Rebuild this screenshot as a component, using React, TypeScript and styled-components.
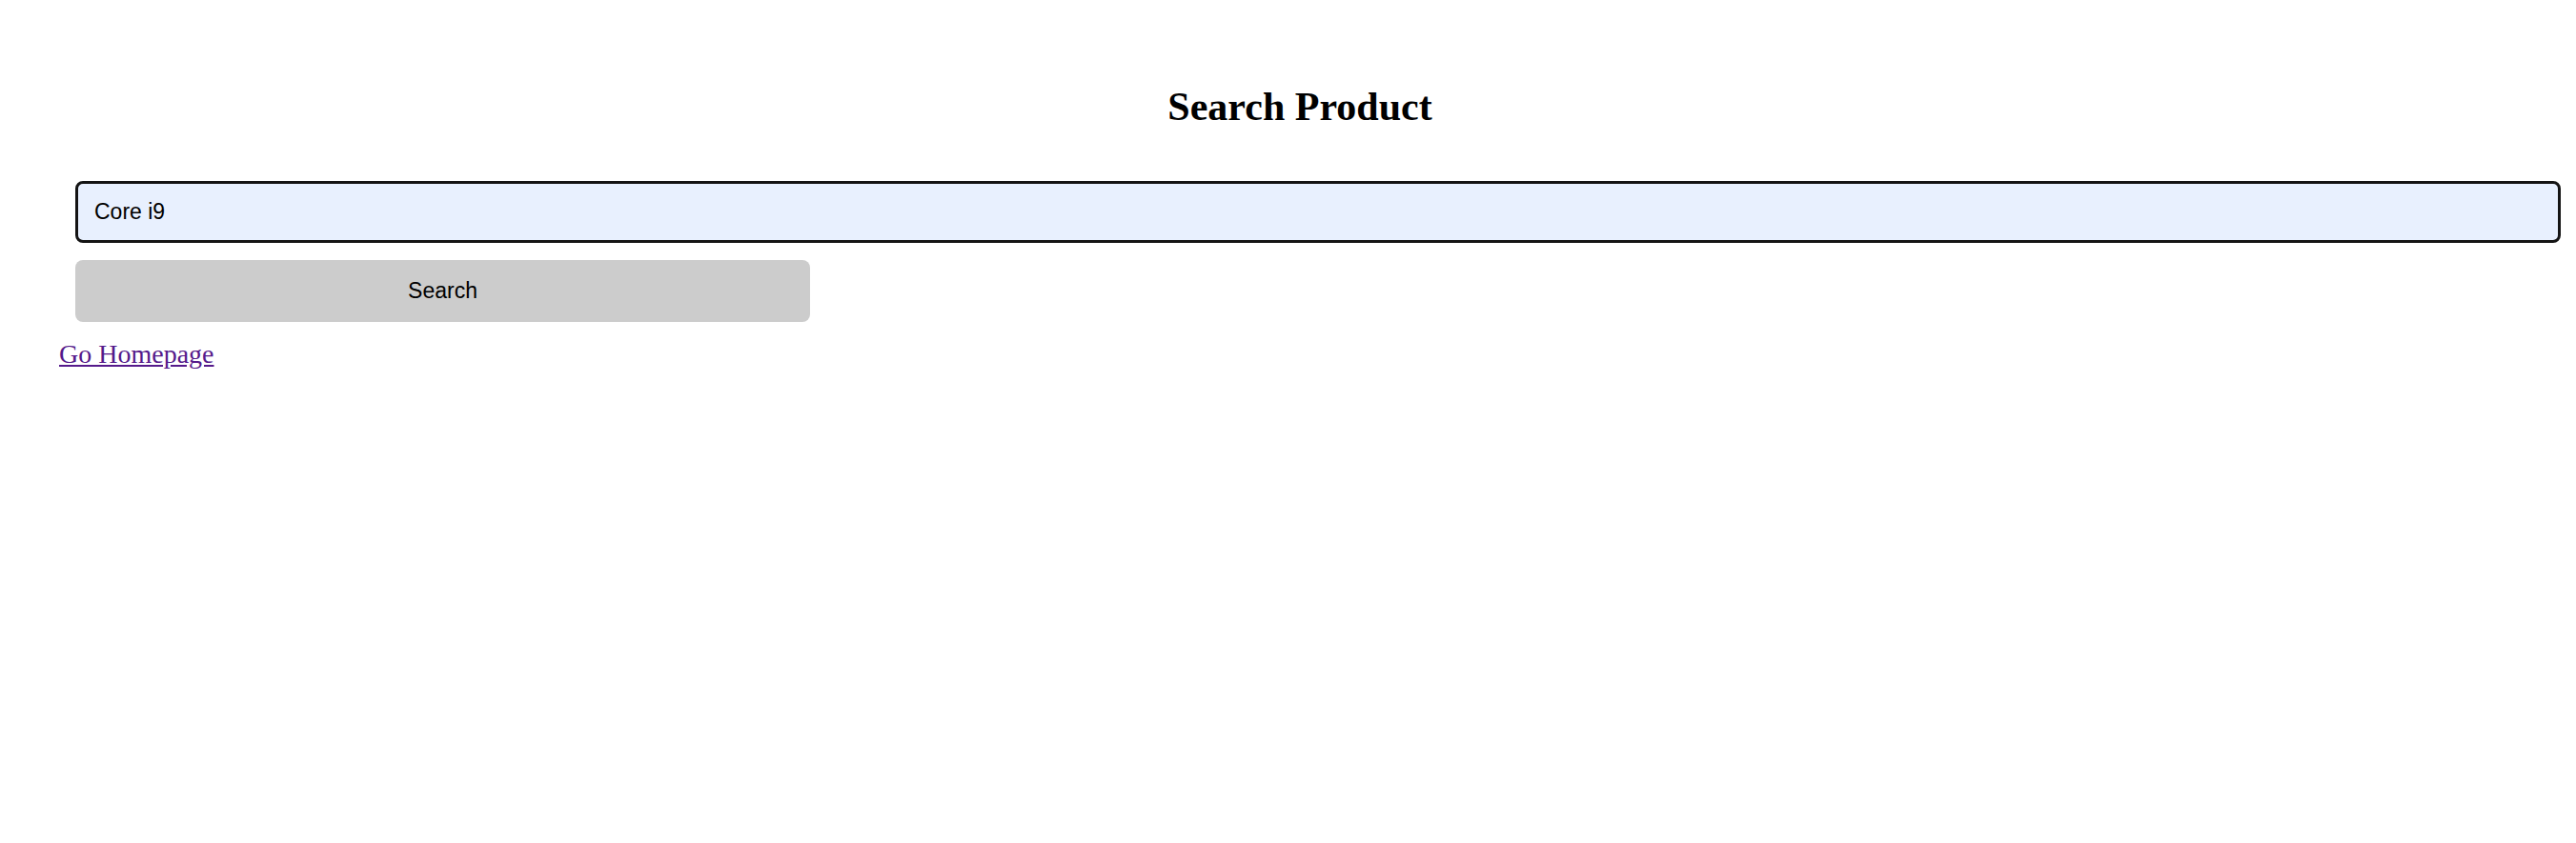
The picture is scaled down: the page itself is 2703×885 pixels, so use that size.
import React from "react";
import styled, { createGlobalStyle } from "styled-components";

const GlobalStyle = createGlobalStyle`
  html, body {
    margin: 0;
    padding: 0;
    background: #ffffff;
    font-family: "Liberation Serif", "Times New Roman", serif;
  }
`;

const Page = styled.div`
  display: flex;
  flex-direction: column;
  align-items: flex-start;
  padding: 0 16px 0 62px;
`;

const Title = styled.h2`
  align-self: stretch;
  margin: 88px 21px 0 0;
  font-family: "Liberation Serif", "Times New Roman", serif;
  font-size: 42px;
  line-height: 48px;
  font-weight: 700;
  color: #000;
  text-align: center;
`;

const Form = styled.form`
  align-self: stretch;
  display: flex;
  flex-direction: column;
  align-items: flex-start;
  gap: 18px;
  margin: 54px 0 0 17px;
`;

const SearchInput = styled.input`
  box-sizing: border-box;
  width: 100%;
  height: 65px;
  padding: 0 17px;
  border: 3px solid #141414;
  border-radius: 8px;
  background: #e8f0fe;
  color: #000;
  font-family: "Liberation Sans", Arial, sans-serif;
  font-size: 23px;
  outline: none;
`;

const SearchButton = styled.button`
  box-sizing: border-box;
  width: 771px;
  height: 65px;
  border: none;
  border-radius: 8px;
  background: #cccccc;
  color: #000;
  font-family: "Liberation Sans", Arial, sans-serif;
  font-size: 23px;
  cursor: pointer;
`;

const LinkRow = styled.div`
  margin-top: 18px;
  font-size: 28px;
  line-height: normal;
`;

const HomeLink = styled.a`
  color: #551a8b;
  text-decoration: underline;
  font-family: "Liberation Serif", "Times New Roman", serif;
`;

export default function App() {
  return (
    <>
      <GlobalStyle />
      <Page>
        <Title>Search Product</Title>
        <Form onSubmit={(e) => e.preventDefault()}>
          <SearchInput type="text" defaultValue="Core i9" />
          <SearchButton type="submit">Search</SearchButton>
        </Form>
        <LinkRow>
          <HomeLink href="#">Go Homepage</HomeLink>
        </LinkRow>
      </Page>
    </>
  );
}
